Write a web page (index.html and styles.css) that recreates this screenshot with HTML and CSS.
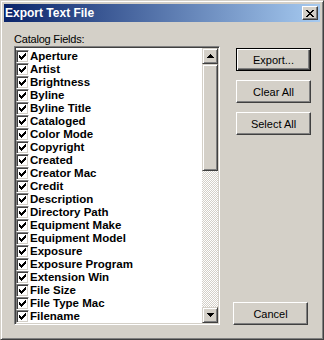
FILE: index.html
```html
<!DOCTYPE html>
<html lang="en">
<head>
  <meta charset="UTF-8" />
  <title>Export Text File</title>
  <link rel="stylesheet" href="styles.css">
</head>
<body>

  <div class="window">
    <div class="titlebar">
      <span class="title">Export Text File</span>
      <button class="close" aria-label="Close">
        <svg width="8" height="7" viewBox="0 0 8 7" shape-rendering="crispEdges">
          <path d="M0 0h2v1H0zM6 0h2v1H6zM1 1h2v1H1zM5 1h2v1H5zM2 2h4v1H2zM3 3h2v1H3zM2 4h4v1H2zM1 5h2v1H1zM5 5h2v1H5zM0 6h2v1H0zM6 6h2v1H6z" fill="#000"/>
        </svg>
      </button>
    </div>

    <div class="content">
      <div class="fields">
        <div class="caption">Catalog Fields:</div>
        <div class="listbox">
          <ul class="items" id="items"></ul>
          <div class="scrollbar">
            <div class="arrow">
              <svg width="7" height="4" viewBox="0 0 7 4" shape-rendering="crispEdges"><path d="M3 0h1v1H3zM2 1h3v1H2zM1 2h5v1H1zM0 3h7v1H0z" fill="#000"/></svg>
            </div>
            <div class="track"><div class="thumb"></div></div>
            <div class="arrow">
              <svg width="7" height="4" viewBox="0 0 7 4" shape-rendering="crispEdges"><path d="M0 0h7v1H0zM1 1h5v1H1zM2 2h3v1H2zM3 3h1v1H3z" fill="#000"/></svg>
            </div>
          </div>
        </div>
      </div>

      <div class="actions">
        <button class="btn default">Export...</button>
        <button class="btn">Clear All</button>
        <button class="btn">Select All</button>
        <button class="btn cancel">Cancel</button>
      </div>
    </div>
  </div>

  <script>
    // campos do catálogo, todos marcados
    const fields = [
      "Aperture", "Artist", "Brightness", "Byline", "Byline Title",
      "Cataloged", "Color Mode", "Copyright", "Created", "Creator Mac",
      "Credit", "Description", "Directory Path", "Equipment Make",
      "Equipment Model", "Exposure", "Exposure Program", "Extension Win",
      "File Size", "File Type Mac", "Filename"
    ];

    const list = document.getElementById("items");
    const checkSvg =
      '<svg width="7" height="7" viewBox="0 0 7 7" shape-rendering="crispEdges">' +
      '<path d="M0 2h1v3H0zM1 3h1v3H1zM2 4h1v3H2zM3 3h1v3H3zM4 2h1v3H4zM5 1h1v3H5zM6 0h1v3H6z" fill="#000"/></svg>';

    fields.forEach((name) => {
      const li = document.createElement("li");
      li.className = "item";
      li.innerHTML = '<span class="check">' + checkSvg + '</span><span class="name"></span>';
      li.querySelector(".name").textContent = name;
      list.appendChild(li);
    });
  </script>
</body>
</html>
```

FILE: styles.css
```css
html, body {
  margin: 0;
  padding: 0;
  background: #d4d0c8;
}

.window {
  width: 324px;
  height: 340px;
  box-sizing: border-box;
  background: #d4d0c8;
  border: 1px solid;
  border-color: #d4d0c8 #404040 #404040 #d4d0c8;
  box-shadow: inset 1px 1px #fff, inset -1px -1px #808080;
  padding: 3px;
  display: flex;
  flex-direction: column;
  font-family: "Liberation Sans", Arial, sans-serif;
  font-size: 11px;
  color: #000;
}

/* barra de titulo */
.titlebar {
  height: 18px;
  display: flex;
  align-items: center;
  justify-content: space-between;
  background: linear-gradient(to right, #0a246a, #a6caf0);
  padding: 0 2px 0 1px;
}

.title {
  color: #fff;
  font-weight: bold;
  font-size: 12px;
}

.close {
  width: 16px;
  height: 14px;
  padding: 0;
  box-sizing: border-box;
  background: #d4d0c8;
  border: 1px solid;
  border-color: #fff #404040 #404040 #fff;
  box-shadow: inset -1px -1px #808080;
  display: flex;
  align-items: center;
  justify-content: center;
}

.close svg {
  display: block;
}

.content {
  flex: 1;
  display: flex;
  gap: 13px;
  padding: 11px 9px 11px 10px;
}

.fields {
  width: 206px;
  display: flex;
  flex-direction: column;
}

.caption {
  height: 13px;
  line-height: 13px;
  letter-spacing: -0.2px;
}

/* lista com checkboxes */
.listbox {
  flex: 1;
  display: flex;
  border: 1px solid;
  border-color: #808080 #fff #fff #808080;
  box-shadow: inset 1px 1px #404040, inset -1px -1px #d4d0c8;
  padding: 1px;
  background: #fff;
}

.items {
  flex: 1;
  margin: 0;
  padding: 2px 0 0 0;
  list-style: none;
  overflow: hidden;
}

.item {
  height: 13px;
  display: flex;
  align-items: center;
  font-weight: bold;
  font-size: 11.5px;
  line-height: 13px;
  white-space: nowrap;
}

.check {
  width: 13px;
  height: 13px;
  box-sizing: border-box;
  border: 1px solid;
  border-color: #808080 #fff #fff #808080;
  box-shadow: inset 1px 1px #404040, inset -1px -1px #d4d0c8;
  background: #fff;
  display: flex;
  align-items: center;
  justify-content: center;
  margin-right: 1px;
  flex-shrink: 0;
}

.check svg {
  display: block;
}

.scrollbar {
  width: 16px;
  display: flex;
  flex-direction: column;
}

.arrow {
  width: 16px;
  height: 16px;
  box-sizing: border-box;
  background: #d4d0c8;
  border: 1px solid;
  border-color: #d4d0c8 #404040 #404040 #d4d0c8;
  box-shadow: inset 1px 1px #fff, inset -1px -1px #808080;
  display: flex;
  align-items: center;
  justify-content: center;
}

.track {
  flex: 1;
  background: repeating-conic-gradient(#d4d0c8 0 25%, #fff 0 50%) 0 0 / 2px 2px;
}

.thumb {
  height: 107px;
  box-sizing: border-box;
  background: #d4d0c8;
  border: 1px solid;
  border-color: #d4d0c8 #404040 #404040 #d4d0c8;
  box-shadow: inset 1px 1px #fff, inset -1px -1px #808080;
}

/* botoes */
.actions {
  width: 78px;
  display: flex;
  flex-direction: column;
  align-items: flex-end;
  gap: 9px;
  padding-top: 15px;
}

.btn {
  width: 75px;
  height: 23px;
  box-sizing: border-box;
  padding: 0;
  background: #d4d0c8;
  font-family: "Liberation Sans", Arial, sans-serif;
  font-size: 11px;
  color: #000;
  border: 1px solid;
  border-color: #fff #404040 #404040 #fff;
  box-shadow: inset -1px -1px #808080;
}

.btn.default {
  border-color: #000;
  box-shadow: inset 1px 1px #fff, inset -1px -1px #404040, inset -2px -2px #808080;
}

.btn.cancel {
  margin-top: auto;
  align-self: flex-start;
}
```
